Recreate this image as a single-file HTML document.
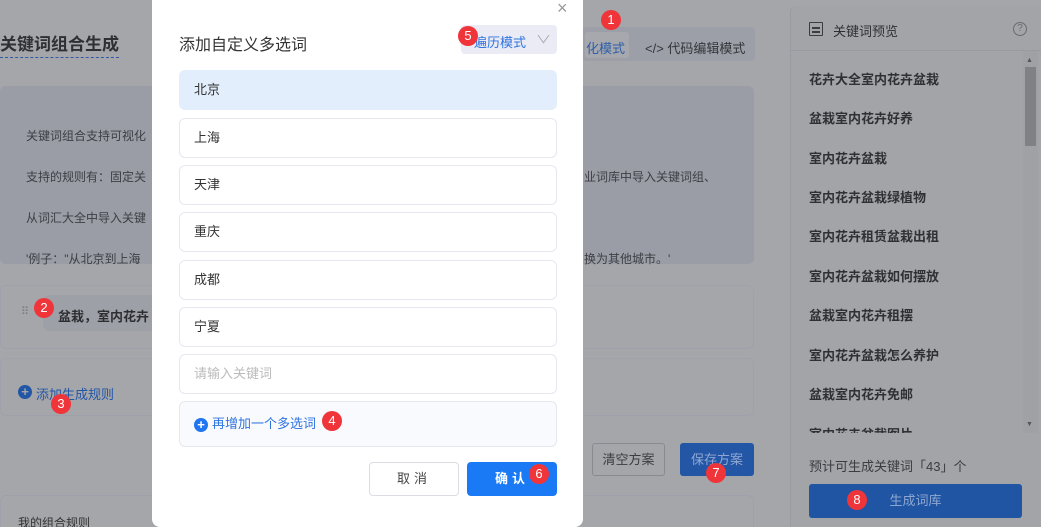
<!DOCTYPE html>
<html style="background:#a4a6aa"><head><meta charset="utf-8"><style>
*{box-sizing:border-box;margin:0;padding:0}
html,body{width:1041px;height:527px;overflow:hidden}
body{position:relative;background:#a4a6aa;font-family:"Liberation Sans","Noto Sans CJK SC",sans-serif;font-size:13px;color:#3a3c40}
.abs{position:absolute}
.badge{position:absolute;width:20px;height:20px;border-radius:50%;background:#f0353a;color:#fff;font-size:13px;text-align:center;line-height:20px;font-family:"Liberation Sans",sans-serif}
.item{position:absolute;left:179px;width:378px;height:40px;border:1px solid #e6e8ef;border-radius:6px;background:#fff;padding-left:14px;line-height:38px;font-size:13px;color:#333}
.kw{position:absolute;left:809px;font-weight:bold;font-size:13px;color:#2e3034}
</style></head><body>
<div class="abs" style="left:0;top:0;width:1041px;height:527px;background:#a4a6aa"></div>
<div class="abs" style="left:0;top:30px;font-size:17px;font-weight:bold;color:#2f3033;border-bottom:1px dashed #3358a8;padding-bottom:2px">关键词组合生成</div>
<div class="abs" style="left:570px;top:27px;width:185px;height:34px;background:#9c9fa7;border-radius:4px"></div>
<div class="abs" style="left:585px;top:32px;width:44px;height:26px;background:#a6a8ad;border-radius:3px"></div>
<div class="abs" style="left:586px;top:38px;color:#2f5ea8;font-size:13px">化模式</div>
<div class="abs" style="left:645px;top:38px;color:#34363a;font-size:13px">&lt;/&gt; 代码编辑模式</div>
<div class="abs" style="left:0;top:86px;width:754px;height:178px;background:#9a9ca6;border-radius:6px"></div>
<div class="abs" style="left:26px;top:127px;font-size:12px;color:#3d3f44">关键词组合支持可视化</div>
<div class="abs" style="left:26px;top:168px;font-size:12px;color:#3d3f44">支持的规则有：固定关</div>
<div class="abs" style="left:26px;top:209px;font-size:12px;color:#3d3f44">从词汇大全中导入关键</div>
<div class="abs" style="left:26px;top:250px;font-size:12px;color:#3d3f44">'例子："从北京到上海</div>
<div class="abs" style="left:584px;top:168px;font-size:12px;color:#3d3f44">业词库中导入关键词组、</div>
<div class="abs" style="left:584px;top:250px;font-size:12px;color:#3d3f44">换为其他城市。'</div>
<div class="abs" style="left:0;top:285px;width:754px;height:64px;border:1px solid #9ea1aa;border-radius:6px"></div>
<div class="abs" style="left:43px;top:295px;width:120px;height:36px;background:#9ea0a7;border-radius:6px"></div>
<div class="abs" style="left:21px;top:310px;color:#7a7c82;font-size:11px;line-height:5px">⠿</div>
<div class="abs" style="left:58px;top:306px;font-weight:bold;font-size:13px;color:#2c2e32">盆栽，室内花卉</div>
<div class="badge" style="left:34px;top:298px">2</div>
<div class="abs" style="left:0;top:358px;width:754px;height:58px;border:1px solid #9ea1aa;border-radius:6px"></div>
<div class="abs" style="left:18px;top:385px;width:14px;height:14px;border-radius:50%;background:#2456a6;color:#a4a6aa;font-size:13px;line-height:13px;text-align:center;font-weight:bold">+</div>
<div class="abs" style="left:36px;top:384px;color:#2456a6;font-size:13px">添加生成规则</div>
<div class="badge" style="left:51px;top:394px">3</div>
<div class="abs" style="left:592px;top:443px;width:73px;height:33px;border:1px solid #888b90;border-radius:3px;text-align:center;line-height:31px;color:#3a3c40">清空方案</div>
<div class="abs" style="left:680px;top:443px;width:74px;height:33px;background:#2456a6;border-radius:3px;text-align:center;line-height:33px;color:#8fa8d2">保存方案</div>
<div class="badge" style="left:706px;top:463px">7</div>
<div class="abs" style="left:0;top:495px;width:754px;height:40px;border:1px solid #9ea1aa;border-radius:6px"></div>
<div class="abs" style="left:18px;top:514px;font-size:12px;color:#333">我的组合规则</div>
<div class="badge" style="left:601px;top:10px">1</div>
<div class="abs" style="left:790px;top:6px;width:251px;height:530px;background:#a2a4a8;border-left:1px solid #9a9ca2;border-radius:6px 0 0 0"></div>
<div class="abs" style="left:790px;top:50px;width:251px;height:1px;background:#989aa0"></div>
<div class="abs" style="left:809px;top:22px;width:14px;height:14px;border:1.5px solid #3a3c40;border-radius:1px"></div>
<div class="abs" style="left:812px;top:27px;width:8px;height:1.5px;background:#3a3c40"></div>
<div class="abs" style="left:812px;top:31px;width:8px;height:1.5px;background:#3a3c40"></div>
<div class="abs" style="left:833px;top:21px;font-size:13px;color:#2f3034">关键词预览</div>
<div class="abs" style="left:1013px;top:22px;width:14px;height:14px;border:1px solid #6a6c70;border-radius:50%;font-size:10px;line-height:12px;text-align:center;color:#6a6c70">?</div>
<div class="abs" style="left:1023px;top:51px;width:15px;height:382px;background:#9fa1a5"></div>
<div class="abs" style="left:1025px;top:67px;width:11px;height:79px;background:#7f8185"></div>
<div class="abs" style="left:1026px;top:57px;font-size:7px;color:#555">▲</div>
<div class="abs" style="left:1026px;top:421px;font-size:7px;color:#555">▼</div>
<div class="kw" style="top:69px">花卉大全室内花卉盆栽</div>
<div class="kw" style="top:108px">盆栽室内花卉好养</div>
<div class="kw" style="top:148px">室内花卉盆栽</div>
<div class="kw" style="top:187px">室内花卉盆栽绿植物</div>
<div class="kw" style="top:226px">室内花卉租赁盆栽出租</div>
<div class="kw" style="top:266px">室内花卉盆栽如何摆放</div>
<div class="kw" style="top:305px">盆栽室内花卉租摆</div>
<div class="kw" style="top:345px">室内花卉盆栽怎么养护</div>
<div class="kw" style="top:384px">盆栽室内花卉免邮</div>
<div class="abs" style="left:790px;top:424px;width:233px;height:9px;overflow:hidden"><div class="kw" style="left:19px;top:0">室内花卉盆栽图片</div></div>
<div class="abs" style="left:809px;top:456px;font-size:13px;color:#3a3c40">预计可生成关键词「43」个</div>
<div class="abs" style="left:809px;top:484px;width:213px;height:34px;background:#2055a4;border-radius:3px;text-align:center;line-height:34px;color:#8ea7d1;font-size:13px">生成词库</div>
<div class="badge" style="left:847px;top:490px">8</div>
<div class="abs" style="left:152px;top:-10px;width:431px;height:537px;background:#fff;border-radius:0 0 8px 8px"></div>
<div class="abs" style="left:557px;top:-2px;font-size:18px;color:#999">×</div>
<div class="abs" style="left:179px;top:31px;font-size:16px;color:#333">添加自定义多选词</div>
<div class="abs" style="left:461px;top:25px;width:96px;height:29px;background:#eaebf5;border-radius:4px"></div>
<div class="abs" style="left:474px;top:32px;font-size:13px;color:#2f74e0">遍历模式</div>
<div class="abs" style="left:538px;top:31px;font-size:11px;color:#aaa;transform:scaleX(1.4)">∨</div>
<div class="badge" style="left:458px;top:26px">5</div>
<div class="item" style="top:70px;background:#e3eefd;border-color:#e3eefd">北京</div>
<div class="item" style="top:118px">上海</div>
<div class="item" style="top:165px">天津</div>
<div class="item" style="top:212px">重庆</div>
<div class="item" style="top:260px">成都</div>
<div class="item" style="top:307px">宁夏</div>
<div class="item" style="top:354px;color:#bbb">请输入关键词</div>
<div class="item" style="top:401px;height:46px;background:#f9fafd;line-height:44px;color:#2f74e0">&nbsp;&nbsp;&nbsp;&nbsp;&nbsp;再增加一个多选词</div>
<div class="abs" style="left:194px;top:418px;width:14px;height:14px;border-radius:50%;background:#1f76f0;color:#fff;font-size:13px;line-height:13px;text-align:center;font-weight:bold">+</div>
<div class="badge" style="left:322px;top:411px">4</div>
<div class="abs" style="left:369px;top:462px;width:90px;height:34px;border:1px solid #dcdde2;border-radius:4px;text-align:center;line-height:32px;color:#444;letter-spacing:4px">取消</div>
<div class="abs" style="left:467px;top:462px;width:90px;height:34px;background:#1a79f5;border-radius:4px;text-align:center;line-height:34px;color:#fff;letter-spacing:4px;font-weight:bold">确认</div>
<div class="badge" style="left:529px;top:464px">6</div>
</body></html>
